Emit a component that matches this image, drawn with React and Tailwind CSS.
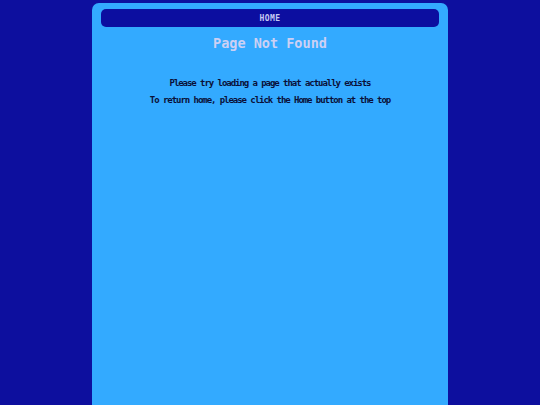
export default function App() {
  return (
    <div
      className="min-h-screen bg-[#0d0f9e] flex justify-center pt-[3px]"
      style={{ fontFamily: '"DejaVu Sans Mono", "Liberation Mono", monospace' }}
    >
      <div className="w-[356px] min-h-[410px] bg-[#33aaff] rounded-t-[7px] px-[9px] pt-[6px]">
        <nav className="h-[18px] rounded-[5px] bg-[#0c0ea0] flex items-center justify-center pt-[1px]">
          <a className="text-[8px] font-bold tracking-[0.4px] text-[#c6c8f2] leading-none">HOME</a>
        </nav>
        <h1 className="mt-[7px] text-center text-[13.5px] font-bold text-[#ccd0f4] leading-[18px]">
          Page Not Found
        </h1>
        <div className="mt-[26px] flex flex-col items-center gap-[7px] text-[9px] font-bold tracking-[-1.05px] text-[#0a1038] leading-[10px]">
          <p>Please try loading a page that actually exists</p>
          <p>To return home, please click the Home button at the top</p>
        </div>
      </div>
    </div>
  )
}
